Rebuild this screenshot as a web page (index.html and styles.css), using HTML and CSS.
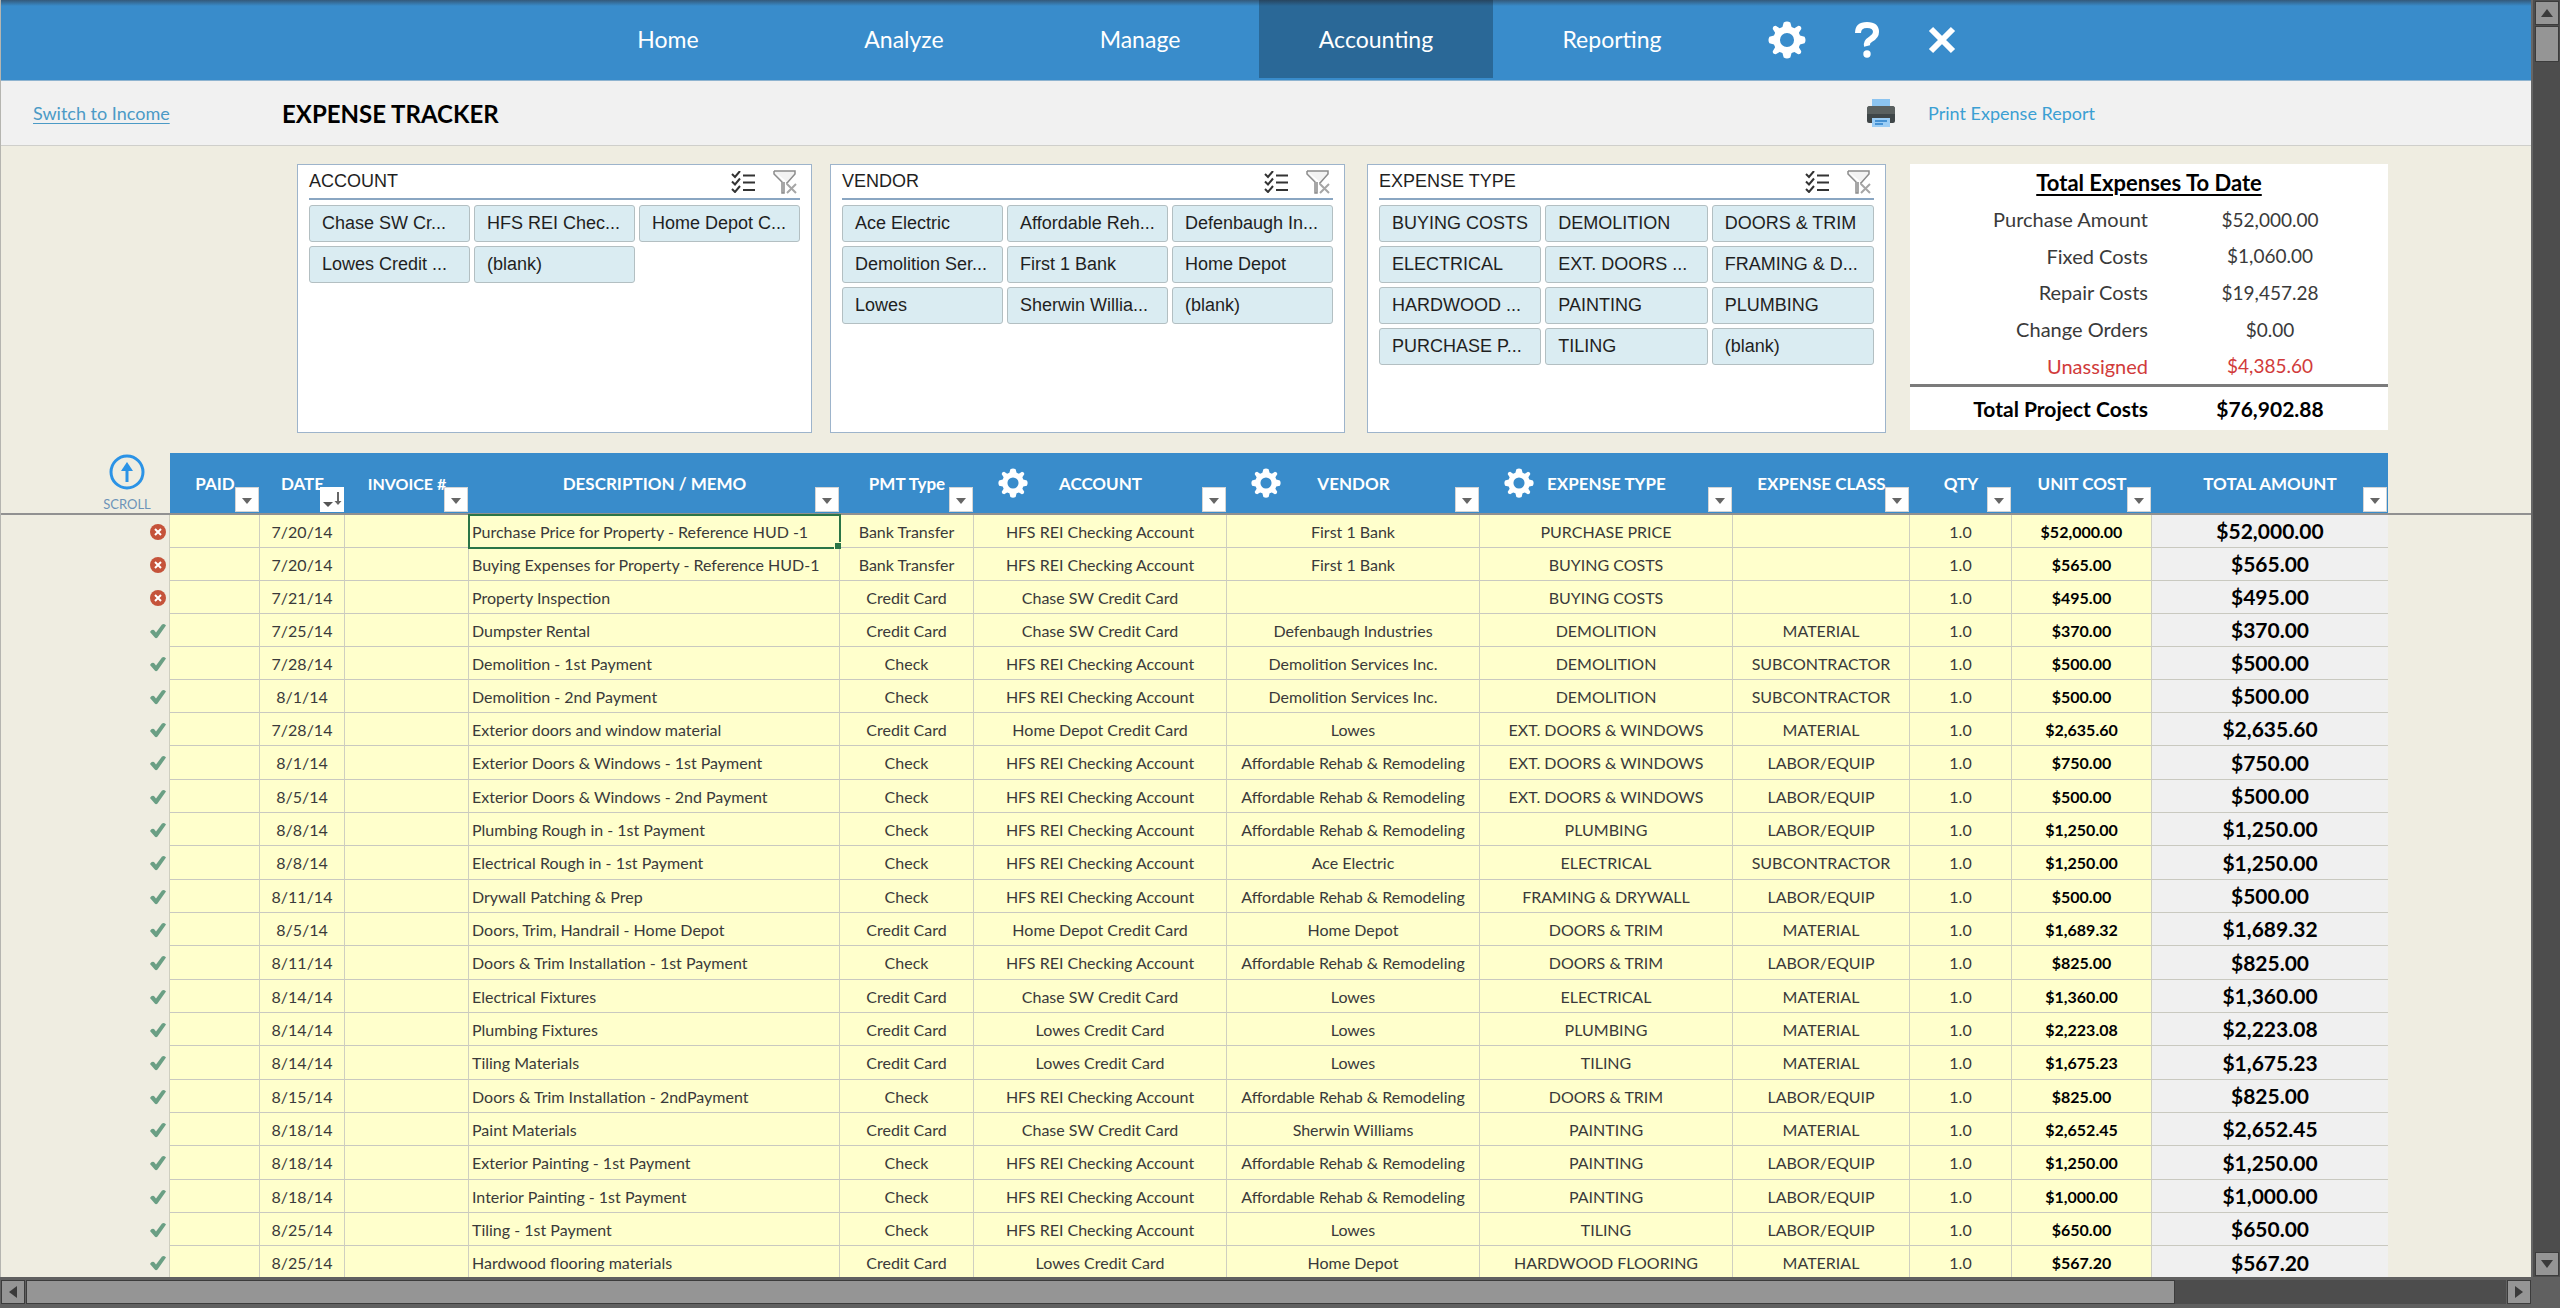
FILE: index.html
```html
<!DOCTYPE html>
<html lang="en">
<head>
<meta charset="utf-8">
<title>Expense Tracker</title>
<link rel="stylesheet" href="styles.css">
</head>
<body>
<svg class="sprite" aria-hidden="true">
  <symbol id="gear" viewBox="0 0 40 40"><path fill="currentColor" fill-rule="evenodd" d="M16.5 1.500Q20-.5 23.500 1.500L24.800 6.200L27.800 7.500L32 5Q35.500 5.500 35 8.400L32.500 12.300L33.700 15.200L38.500 16.500Q40.500 20 38.500 23.500L33.700 24.800L32.500 27.700L35 31.800Q35 35.200 31.800 35L27.800 32.500L24.800 33.700L23.500 38.500Q20 40.500 16.500 38.500L15.200 33.700L12.200 32.500L8.200 35Q4.800 35 5 31.800L7.500 27.700L6.300 24.800L1.500 23.500Q-.5 20 1.500 16.500L6.300 15.200L7.500 12.300L5 8.400Q5 5 8.200 5L12.200 7.500L15.200 6.200ZM20 12.600A7.400 7.400 0 1 0 20 27.400A7.400 7.400 0 1 0 20 12.600Z"/></symbol>
  <symbol id="multi" viewBox="0 0 24 22"><g fill="none" stroke="#333" stroke-width="2"><path d="M1 3l3 3 5-6M1 10.500l3 3 5-6M1 18l3 3 5-6"/><path d="M12 4.500h12M12 11.500h12M12 19h12"/></g></symbol>
  <symbol id="unfilter" viewBox="0 0 24 24"><path d="M1 1h21v3l-8 9v-1M1 1v3l8 8v11h2V12" fill="#f2f2f2" stroke="#8c8c8c" stroke-width="1.500"/><path d="M14 14l9 9M23 14l-9 9" stroke="#a6a6a6" stroke-width="2"/></symbol>
  <symbol id="cross" viewBox="0 0 16 16"><circle cx="8" cy="8" r="8" fill="#c5533a"/><path d="M5 5l6 6M11 5l-6 6" stroke="#fff" stroke-width="2"/></symbol>
  <symbol id="check" viewBox="0 0 16 16"><path d="M0 9Q1.500 6 4 7L6 9.500L12 1.500Q14.500 0 16 2.500L7.500 14.500Q6 16 4.800 14.500Z" fill="#6a9f84"/></symbol>
</svg>
<div class="app">
  <main class="sheet">
    <nav class="nav">
      <div class="tabs">
        <a class="tab" href="#home">Home</a>
        <a class="tab" href="#analyze">Analyze</a>
        <a class="tab" href="#manage">Manage</a>
        <a class="tab tab-active" href="#accounting" aria-current="page">Accounting</a>
        <a class="tab" href="#reporting">Reporting</a>
      </div>
      <div class="tools">
        <button class="tool" type="button" aria-label="Settings"><svg width="38" height="38"><use href="#gear"/></svg></button>
        <button class="tool" type="button" aria-label="Help"><svg width="26" height="38" viewBox="0 0 26 38"><path d="M4 12Q4 4 13 4T22 11Q22 15 17 18T13 25" fill="none" stroke="#fff" stroke-width="6"/><circle cx="13" cy="33" r="3.700" fill="#fff"/></svg></button>
        <button class="tool" type="button" aria-label="Close"><svg width="28" height="28" viewBox="0 0 28 28"><path d="M3 3l22 22M25 3L3 25" stroke="#fff" stroke-width="6"/></svg></button>
      </div>
    </nav>
    <header class="titlebar">
      <a class="switch" href="#income">Switch to Income</a>
      <h1 class="title">EXPENSE TRACKER</h1>
      <a class="print" href="#print"><svg width="28" height="28" viewBox="0 0 28 28"><path d="M5 0h18v9H5z" fill="#8cc4f0"/><path d="M3 7h22q3 0 3 3v12q0 2-2 2H2q-2 0-2-2V10q0-3 3-3z" fill="#3f4648"/><path d="M0 10q0-3 3-3h22q3 0 3 3v5H0z" fill="#5a605f"/><path d="M5 7h18V5H5z" fill="#8cc4f0"/><path d="M5 19h18v9H5z" fill="#9bcdf5"/><path d="M8 22h12M8 25h8" stroke="#2a7fc9" stroke-width="1.500"/></svg>Print Expense Report</a>
    </header>
    <section class="filters">
      <section class="slicer">
        <div class="slicer-head"><h2>ACCOUNT</h2><button type="button" aria-label="Multi-select"><svg width="24" height="22"><use href="#multi"/></svg></button><button type="button" aria-label="Clear filter"><svg width="24" height="24"><use href="#unfilter"/></svg></button></div>
        <div class="chips"><button type="button">Chase SW Cr...</button><button type="button">HFS REI Chec...</button><button type="button">Home Depot C...</button><button type="button">Lowes Credit ...</button><button type="button">(blank)</button></div>
      </section>
      <section class="slicer">
        <div class="slicer-head"><h2>VENDOR</h2><button type="button" aria-label="Multi-select"><svg width="24" height="22"><use href="#multi"/></svg></button><button type="button" aria-label="Clear filter"><svg width="24" height="24"><use href="#unfilter"/></svg></button></div>
        <div class="chips"><button type="button">Ace Electric</button><button type="button">Affordable Reh...</button><button type="button">Defenbaugh In...</button><button type="button">Demolition Ser...</button><button type="button">First 1 Bank</button><button type="button">Home Depot</button><button type="button">Lowes</button><button type="button">Sherwin Willia...</button><button type="button">(blank)</button></div>
      </section>
      <section class="slicer slicer-type">
        <div class="slicer-head"><h2>EXPENSE TYPE</h2><button type="button" aria-label="Multi-select"><svg width="24" height="22"><use href="#multi"/></svg></button><button type="button" aria-label="Clear filter"><svg width="24" height="24"><use href="#unfilter"/></svg></button></div>
        <div class="chips"><button type="button">BUYING COSTS</button><button type="button">DEMOLITION</button><button type="button">DOORS &amp; TRIM</button><button type="button">ELECTRICAL</button><button type="button">EXT. DOORS ...</button><button type="button">FRAMING &amp; D...</button><button type="button">HARDWOOD ...</button><button type="button">PAINTING</button><button type="button">PLUMBING</button><button type="button">PURCHASE P...</button><button type="button">TILING</button><button type="button">(blank)</button></div>
      </section>
      <table class="summary">
        <caption>Total Expenses To Date</caption>
        <tbody>
          <tr><th scope="row">Purchase Amount</th><td>$52,000.00</td></tr>
          <tr><th scope="row">Fixed Costs</th><td>$1,060.00</td></tr>
          <tr><th scope="row">Repair Costs</th><td>$19,457.28</td></tr>
          <tr><th scope="row">Change Orders</th><td>$0.00</td></tr>
          <tr class="unassigned"><th scope="row">Unassigned</th><td>$4,385.60</td></tr>
        </tbody>
        <tfoot><tr><th scope="row">Total Project Costs</th><td>$76,902.88</td></tr></tfoot>
      </table>
    </section>
    <table class="ledger">
      <colgroup><col class="c-gutter"><col class="c-paid"><col class="c-date"><col class="c-invoice"><col class="c-memo"><col class="c-pmt"><col class="c-wide"><col class="c-wide"><col class="c-wide"><col class="c-class"><col class="c-qty"><col class="c-unit"><col class="c-total"><col class="c-edge"></colgroup>
      <thead><tr>
        <td class="scroll-cell"><a class="scroll" href="#top"><svg width="36" height="36" viewBox="0 0 36 36"><circle cx="18" cy="18" r="16" fill="none" stroke="#2b93e6" stroke-width="3"/><path d="M18 28V14" stroke="#2b93e6" stroke-width="3"/><path d="M18 8l6 9H12z" fill="#2b93e6"/></svg>SCROLL</a></td>
        <th scope="col"><div class="head"><span>PAID</span></div><button class="drop" type="button" aria-label="Filter paid"></button></th>
        <th scope="col"><div class="head"><span>DATE</span></div><button class="drop drop-sorted" type="button" aria-label="Filter date"><svg width="24" height="25" viewBox="0 0 24 25"><path d="M3 15h10l-5 5z" fill="#555"/><path d="M18 5v12" stroke="#666" stroke-width="2"/><path d="M14.500 14h7L18 18z" fill="#666"/></svg></button></th>
        <th scope="col" class="small"><div class="head"><span>INVOICE #</span></div><button class="drop" type="button" aria-label="Filter invoice"></button></th>
        <th scope="col"><div class="head"><span>DESCRIPTION / MEMO</span></div><button class="drop" type="button" aria-label="Filter description"></button></th>
        <th scope="col"><div class="head"><span>PMT Type</span></div><button class="drop" type="button" aria-label="Filter payment type"></button></th>
        <th scope="col"><div class="head"><svg class="cog" width="30" height="30"><use href="#gear"/></svg><span>ACCOUNT</span></div><button class="drop" type="button" aria-label="Filter account"></button></th>
        <th scope="col"><div class="head"><svg class="cog" width="30" height="30"><use href="#gear"/></svg><span>VENDOR</span></div><button class="drop" type="button" aria-label="Filter vendor"></button></th>
        <th scope="col"><div class="head"><svg class="cog" width="30" height="30"><use href="#gear"/></svg><span>EXPENSE TYPE</span></div><button class="drop" type="button" aria-label="Filter expense type"></button></th>
        <th scope="col"><div class="head"><span>EXPENSE CLASS</span></div><button class="drop" type="button" aria-label="Filter expense class"></button></th>
        <th scope="col"><div class="head"><span>QTY</span></div><button class="drop" type="button" aria-label="Filter quantity"></button></th>
        <th scope="col"><div class="head"><span>UNIT COST</span></div><button class="drop" type="button" aria-label="Filter unit cost"></button></th>
        <th scope="col"><div class="head"><span>TOTAL AMOUNT</span></div><button class="drop" type="button" aria-label="Filter total"></button></th>
        <td></td>
      </tr></thead>
      <tbody id="rows"></tbody>
    </table>
  </main>
  <div class="vbar">
    <button class="arrow" type="button" aria-label="Scroll up"><svg width="12" height="8" viewBox="0 0 12 8"><path d="M0 8L6 0l6 8z"/></svg></button>
    <div class="vthumb"></div>
    <div class="space"></div>
    <button class="arrow" type="button" aria-label="Scroll down"><svg width="12" height="8" viewBox="0 0 12 8"><path d="M0 0h12L6 8z"/></svg></button>
  </div>
  <div class="hbar">
    <button class="arrow" type="button" aria-label="Scroll left"><svg width="8" height="12" viewBox="0 0 8 12"><path d="M8 0v12L0 6z"/></svg></button>
    <div class="htrack"><div class="hthumb"></div><div class="hrest"></div></div>
    <button class="arrow" type="button" aria-label="Scroll right"><svg width="8" height="12" viewBox="0 0 8 12"><path d="M0 0v12l8-6z"/></svg></button>
  </div>
</div>
<script src="app.js"></script>
</body>
</html>
```
FILE: styles.css
```css
* { box-sizing: border-box; }
body { margin: 0; font-family: Lato, Carlito, sans-serif; color: #3a3a3a; background: #606060; }
button { font: inherit; color: inherit; margin: 0; padding: 0; border: 0; background: none; }
svg { display: block; }
.sprite { position: absolute; width: 0; height: 0; }

.app { display: grid; grid-template-columns: minmax(0, 1fr) 29px; grid-template-rows: minmax(0, 1fr) 31px; height: 100vh; }
.sheet { overflow: hidden; background: #efede1; border-left: 1px solid #b5b5b0; }

/* Navigation */
.nav { display: flex; height: 81px; padding-left: 550px; background: linear-gradient(#34597a, #398ccb 6px); border-bottom: 1px solid #8fb4d0; }
.tabs { display: flex; gap: 2px; }
.tab { display: flex; align-items: center; justify-content: center; width: 234px; height: 78px; color: #fff; font-size: 23px; text-decoration: none; }
.tab-active { background: linear-gradient(#27455f, #2a6897 6px); }
.tools { display: flex; align-items: center; gap: 48px; margin-left: 39px; }
.tool { color: #fff; }

/* Title bar */
.titlebar { display: flex; align-items: center; height: 65px; padding-right: 436px; background: #f1f1f1; border-bottom: 1px solid #cfcfcb; }
.switch { width: 249px; margin-left: 32px; color: #4b9ac6; font-size: 18px; text-underline-offset: 3px; }
.title { margin: 0; color: #000; font-size: 24px; font-weight: 700; }
.print { display: flex; align-items: center; gap: 33px; margin-left: auto; color: #3b9fd3; font-size: 18px; text-decoration: none; }

/* Slicers and summary */
.filters { display: grid; grid-template-columns: 515fr 515fr 523fr 484px; column-gap: 18px; padding: 18px 143px 20px 296px; }
.slicer { height: 269px; padding: 0 11px; background: #fff; border: 1px solid #9db4cb; font-family: "Liberation Sans", Arial, sans-serif; color: #1f1f1f; }
.slicer-type { margin-left: 4px; }
.slicer-head { display: flex; align-items: center; height: 35px; padding-right: 3px; border-bottom: 2px solid #8aa6c2; }
.slicer-head h2 { flex: 1; margin: 0; font-size: 18px; font-weight: 400; }
.slicer-head button + button { margin-left: 18px; }
.chips { display: grid; grid-template-columns: repeat(3, 1fr); gap: 4px; padding-top: 5px; }
.chips button { height: 37px; padding-left: 12px; overflow: hidden; background: #daecf2; border: 1px solid #b3bfc2; border-radius: 3px; font-size: 18px; text-align: left; white-space: nowrap; }
.summary { display: grid; grid-template-rows: 37px 183px 46px; height: 266px; margin-left: 6px; background: #fff; font-size: 19px; }
.summary caption { display: block; padding-top: 5px; color: #000; font-size: 22px; font-weight: 700; line-height: 28px; text-decoration: underline; text-underline-offset: 3px; }
.summary tbody, .summary tfoot { display: grid; grid-auto-rows: 1fr; }
.summary tr { display: grid; grid-template-columns: 1fr 236px; align-items: center; }
.summary th { padding: 0 4px 0 0; font-size: 20px; font-weight: 400; text-align: right; }
.summary td { padding: 0; text-align: center; }
.summary .unassigned { color: #d13b3b; }
.summary tfoot { border-top: 3px solid #7b7b7b; color: #000; }
.summary tfoot th, .summary tfoot td { font-size: 21px; font-weight: 700; }

/* Ledger */
.ledger { width: 100%; border-collapse: separate; border-spacing: 0; table-layout: fixed; font-size: 16px; }
.c-gutter { width: 169px; }
.c-paid { width: 90px; }
.c-date { width: 85px; }
.c-invoice { width: 124px; }
.c-pmt { width: 134px; }
.c-wide { width: 253px; }
.c-class { width: 177px; }
.c-qty { width: 102px; }
.c-unit { width: 140px; }
.c-total { width: 236px; }
.c-edge { width: 143px; }
.ledger th, .ledger td { padding: 0; white-space: nowrap; }
.ledger thead tr > * { position: relative; height: 62px; border-bottom: 2px solid #919191; }
.ledger th { background: #398ccb; color: #fff; font-size: 17px; font-weight: 700; }
.ledger th.small { font-size: 16px; }
.head { display: grid; grid-template-columns: 1fr auto 1fr; align-items: center; height: 60px; }
.head span { grid-column: 2; }
.head .cog { grid-column: 1; grid-row: 1; margin-left: 24px; }
.drop { position: absolute; right: 1px; bottom: 1px; width: 24px; height: 25px; background: #fff; border: 1px solid #d5d5d5; }
.drop::after { content: ""; display: block; margin: 2px auto 0; width: 0; border: 5px solid transparent; border-top: 6px solid #666; border-bottom: 0; }
.drop-sorted { border: 0; }
.drop-sorted::after { display: none; }
.scroll { display: flex; flex-direction: column; align-items: center; gap: 6px; width: 84px; margin-left: 84px; color: #6c93b8; font-size: 13px; line-height: 16px; text-decoration: none; }
.ledger tbody td { height: 33px; background: #ffffcc; border-right: 1px solid #cfcfc0; border-bottom: 1px solid #c9c9c0; text-align: center; }
.ledger tbody tr:nth-child(3n+8) td { height: 34px; }
.ledger tbody .status, .ledger tbody .edge { background: none; border-bottom: 0; }
.ledger tbody .edge { border-right: 0; }
.status svg { margin-left: auto; margin-right: 3px; }
.ledger tbody .memo { padding-left: 3px; text-align: left; }
.ledger tbody .unit { color: #000; font-weight: 700; }
.ledger tbody .total { background: #f0f0f0; border-right: 0; color: #000; font-size: 21px; font-weight: 700; line-height: 24px; }
.ledger tbody .selected { position: relative; outline: 2px solid #2a7547; outline-offset: -1px; }
.selected::after { content: ""; position: absolute; right: -2px; bottom: -2px; width: 6px; height: 6px; background: #2a7547; border: solid #ffffcc; border-width: 1px 0 0 1px; }

/* Scroll bars */
.arrow { display: flex; align-items: center; justify-content: center; width: 24px; height: 24px; background: #959595; border: 1px solid #3c3c3c; fill: #3a3a3a; }
.vbar { display: flex; flex-direction: column; align-items: center; gap: 1px; padding: 1px 0; background: #4d4d4d; border-left: 2px solid #666; }
.vthumb { width: 24px; height: 36px; background: #959595; border: 1px solid #3c3c3c; }
.space { flex: 1; }
.hbar { grid-column: 1 / -1; display: flex; gap: 1px; padding: 3px 29px 4px 1px; background: #606060; }
.htrack { flex: 1; display: flex; background: #4d4d4d; }
.hthumb { flex: 2148; height: 24px; background: #959595; border: 1px solid #3c3c3c; }
.hrest { flex: 331; }
```
FILE: app.js
```js
const HFS = "HFS REI Checking Account", CHASE = "Chase SW Credit Card", HD = "Home Depot Credit Card", LOWES = "Lowes Credit Card";
const ARR = "Affordable Rehab & Remodeling", DSI = "Demolition Services Inc.", EXT = "EXT. DOORS & WINDOWS";
const expenses = [
  ["7/20/14", "Purchase Price for Property - Reference HUD -1", "Bank Transfer", HFS, "First 1 Bank", "PURCHASE PRICE", "", "$52,000.00"],
  ["7/20/14", "Buying Expenses for Property - Reference HUD-1", "Bank Transfer", HFS, "First 1 Bank", "BUYING COSTS", "", "$565.00"],
  ["7/21/14", "Property Inspection", "Credit Card", CHASE, "", "BUYING COSTS", "", "$495.00"],
  ["7/25/14", "Dumpster Rental", "Credit Card", CHASE, "Defenbaugh Industries", "DEMOLITION", "MATERIAL", "$370.00"],
  ["7/28/14", "Demolition - 1st Payment", "Check", HFS, DSI, "DEMOLITION", "SUBCONTRACTOR", "$500.00"],
  ["8/1/14", "Demolition - 2nd Payment", "Check", HFS, DSI, "DEMOLITION", "SUBCONTRACTOR", "$500.00"],
  ["7/28/14", "Exterior doors and window material", "Credit Card", HD, "Lowes", EXT, "MATERIAL", "$2,635.60"],
  ["8/1/14", "Exterior Doors & Windows - 1st Payment", "Check", HFS, ARR, EXT, "LABOR/EQUIP", "$750.00"],
  ["8/5/14", "Exterior Doors & Windows - 2nd Payment", "Check", HFS, ARR, EXT, "LABOR/EQUIP", "$500.00"],
  ["8/8/14", "Plumbing Rough in - 1st Payment", "Check", HFS, ARR, "PLUMBING", "LABOR/EQUIP", "$1,250.00"],
  ["8/8/14", "Electrical Rough in - 1st Payment", "Check", HFS, "Ace Electric", "ELECTRICAL", "SUBCONTRACTOR", "$1,250.00"],
  ["8/11/14", "Drywall Patching & Prep", "Check", HFS, ARR, "FRAMING & DRYWALL", "LABOR/EQUIP", "$500.00"],
  ["8/5/14", "Doors, Trim, Handrail - Home Depot", "Credit Card", HD, "Home Depot", "DOORS & TRIM", "MATERIAL", "$1,689.32"],
  ["8/11/14", "Doors & Trim Installation - 1st Payment", "Check", HFS, ARR, "DOORS & TRIM", "LABOR/EQUIP", "$825.00"],
  ["8/14/14", "Electrical Fixtures", "Credit Card", CHASE, "Lowes", "ELECTRICAL", "MATERIAL", "$1,360.00"],
  ["8/14/14", "Plumbing Fixtures", "Credit Card", LOWES, "Lowes", "PLUMBING", "MATERIAL", "$2,223.08"],
  ["8/14/14", "Tiling Materials", "Credit Card", LOWES, "Lowes", "TILING", "MATERIAL", "$1,675.23"],
  ["8/15/14", "Doors & Trim Installation - 2ndPayment", "Check", HFS, ARR, "DOORS & TRIM", "LABOR/EQUIP", "$825.00"],
  ["8/18/14", "Paint Materials", "Credit Card", CHASE, "Sherwin Williams", "PAINTING", "MATERIAL", "$2,652.45"],
  ["8/18/14", "Exterior Painting - 1st Payment", "Check", HFS, ARR, "PAINTING", "LABOR/EQUIP", "$1,250.00"],
  ["8/18/14", "Interior Painting - 1st Payment", "Check", HFS, ARR, "PAINTING", "LABOR/EQUIP", "$1,000.00"],
  ["8/25/14", "Tiling - 1st Payment", "Check", HFS, "Lowes", "TILING", "LABOR/EQUIP", "$650.00"],
  ["8/25/14", "Hardwood flooring materials", "Credit Card", LOWES, "Home Depot", "HARDWOOD FLOORING", "MATERIAL", "$567.20"]
];

const esc = (s) => s.replace(/&/g, "&amp;");
document.getElementById("rows").innerHTML = expenses.map(([date, memo, pmt, account, vendor, type, cls, cost], i) => `
  <tr>
    <td class="status"><svg width="16" height="16"><use href="#${cls ? "check" : "cross"}"/></svg></td>
    <td></td><td>${date}</td><td></td>
    <td class="memo${i === 0 ? " selected" : ""}">${esc(memo)}</td>
    <td>${pmt}</td><td>${account}</td><td>${esc(vendor)}</td><td>${esc(type)}</td><td>${cls}</td>
    <td>1.0</td><td class="unit">${cost}</td><td class="total">${cost}</td><td class="edge"></td>
  </tr>`).join("");
```
